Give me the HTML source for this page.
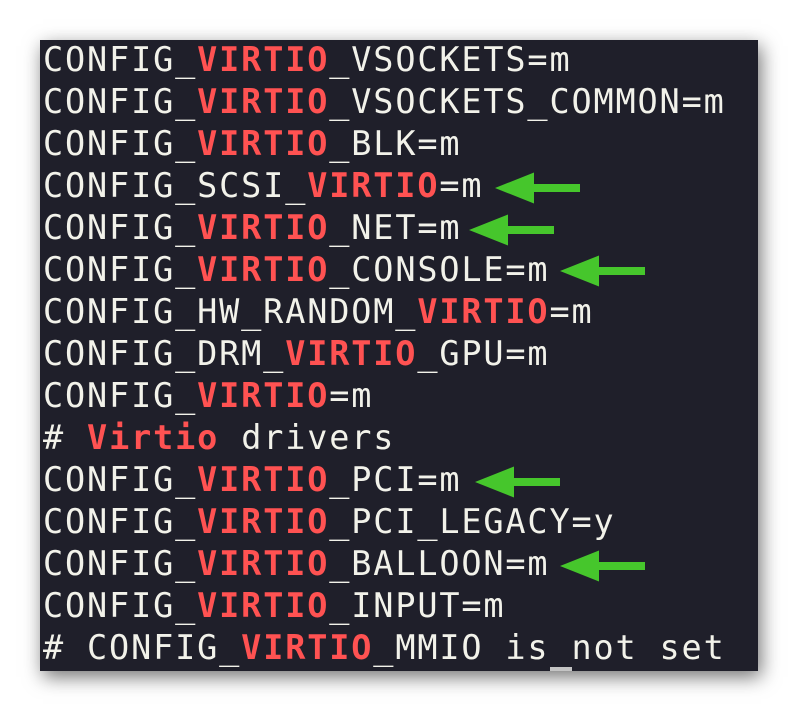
<!DOCTYPE html>
<html><head><meta charset="utf-8"><style>
html,body{margin:0;padding:0;background:#fff;width:798px;height:712px;overflow:hidden}
.box{position:absolute;left:40px;top:40px;width:718px;height:631px;background:#1f1f2a;box-shadow:3px 6px 18px rgba(0,0,0,0.55)}
.t{position:absolute;left:43px;top:39px;margin:0;font-family:"DejaVu Sans Mono","Liberation Mono",monospace;font-size:33.5px;letter-spacing:1.85px;line-height:42px;color:#f2f2ea;white-space:pre}
.r{color:#ff5252;font-weight:bold}
.cur{position:absolute;left:550px;top:667px;width:22px;height:4px;background:#c4c4c4}
svg{position:absolute;left:0;top:0}
</style></head><body>
<div class="box"></div>
<pre class="t">CONFIG_<span class="r">VIRTIO</span>_VSOCKETS=m
CONFIG_<span class="r">VIRTIO</span>_VSOCKETS_COMMON=m
CONFIG_<span class="r">VIRTIO</span>_BLK=m
CONFIG_SCSI_<span class="r">VIRTIO</span>=m
CONFIG_<span class="r">VIRTIO</span>_NET=m
CONFIG_<span class="r">VIRTIO</span>_CONSOLE=m
CONFIG_HW_RANDOM_<span class="r">VIRTIO</span>=m
CONFIG_DRM_<span class="r">VIRTIO</span>_GPU=m
CONFIG_<span class="r">VIRTIO</span>=m
# <span class="r">Virtio</span> drivers
CONFIG_<span class="r">VIRTIO</span>_PCI=m
CONFIG_<span class="r">VIRTIO</span>_PCI_LEGACY=y
CONFIG_<span class="r">VIRTIO</span>_BALLOON=m
CONFIG_<span class="r">VIRTIO</span>_INPUT=m
# CONFIG_<span class="r">VIRTIO</span>_MMIO is not set</pre>
<div class="cur"></div>
<svg width="798" height="712" fill="#46c62c">
<g transform="translate(495,188)"><polygon points="0,0 39,-15.5 39,-4 85,-4 85,4 39,4 39,15.5"/></g>
<g transform="translate(469,230)"><polygon points="0,0 39,-15.5 39,-4 85,-4 85,4 39,4 39,15.5"/></g>
<g transform="translate(560,271)"><polygon points="0,0 39,-15.5 39,-4 85,-4 85,4 39,4 39,15.5"/></g>
<g transform="translate(475,482)"><polygon points="0,0 39,-15.5 39,-4 85,-4 85,4 39,4 39,15.5"/></g>
<g transform="translate(560,566)"><polygon points="0,0 39,-15.5 39,-4 85,-4 85,4 39,4 39,15.5"/></g>
</svg>
</body></html>
